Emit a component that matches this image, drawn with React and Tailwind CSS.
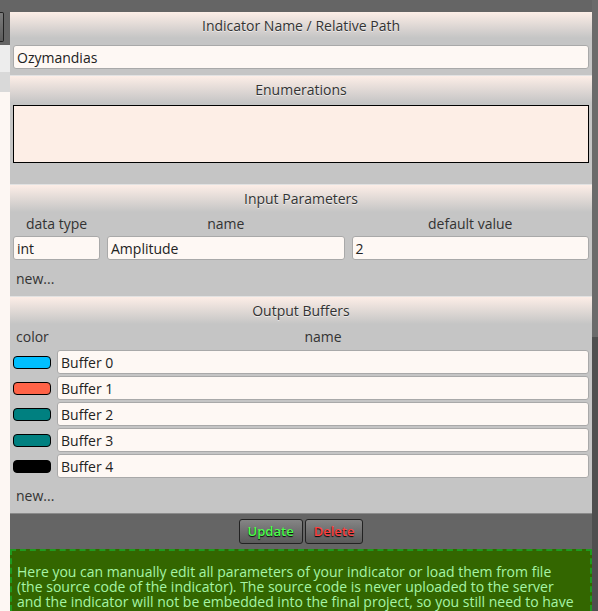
const headerBase =
  "flex items-center justify-center text-[14px] text-[#333] bg-gradient-to-b from-[#fdeee7] to-[#c5c5c5] [text-shadow:0_1px_0_rgba(255,255,255,0.6)]";
const headerCls = `${headerBase} h-[28px] border-t border-[#e2e2e2]`;

const inputCls =
  "h-[24px] flex items-center px-[3px] text-[14px] text-[#222] bg-[#fef8f4] border border-[#a9a9a9] rounded-[3px] w-full";

const Field = ({ value, className = "" }) => (
  <div className={`${inputCls} ${className}`}>{value}</div>
);

const buffers = [
  { name: "Buffer 0", color: "bg-[#00bfff]" },
  { name: "Buffer 1", color: "bg-[#ff6347]" },
  { name: "Buffer 2", color: "bg-[#008080]" },
  { name: "Buffer 3", color: "bg-[#008080]" },
  { name: "Buffer 4", color: "bg-[#000000]" },
];

export default function App() {
  return (
    <div className="w-[598px] h-[611px] overflow-hidden bg-[#656565] flex font-['Open_Sans',sans-serif]">
      {/* left edge of the page behind the dialog */}
      <div className="w-[10px] shrink-0 flex flex-col">
        <div className="h-[12px]" />
        <div className="h-[30px] w-[4px] bg-gradient-to-b from-[#7c7c7c] to-[#5c5c5c] border border-l-0 border-[#222] rounded-r-[2px]" />
        <div className="h-[3px]" />
        <div className="h-[27px] bg-[#ededed]" />
        <div className="h-[20px] bg-[#d9d9d9]" />
        <div className="flex-1 bg-[#fdf7f3]" />
      </div>

      {/* dialog */}
      <div className="w-[582px] shrink-0 mt-[12px] flex flex-col bg-[#c5c5c5]">
        <div className={`${headerBase} h-[26px]`}>Indicator Name / Relative Path</div>
        <div className="px-[3px] pt-[7px] pb-[6px]">
          <Field value="Ozymandias" />
        </div>

        <div className={headerCls}>Enumerations</div>
        <div className="px-[3px] pt-[2px] pb-[21px]">
          <div className="h-[58px] bg-[#fdeee6] border border-black" />
        </div>

        <div className={headerCls}>Input Parameters</div>
        <div className="px-[3px] pb-[8px]">
          <div className="grid grid-cols-[87px_1fr_1fr] gap-x-[7px] text-[14px] text-[#333]">
            <div className="h-[22px] flex items-center justify-center">data type</div>
            <div className="h-[22px] flex items-center justify-center">name</div>
            <div className="h-[22px] flex items-center justify-center">default value</div>
          </div>
          <div className="grid grid-cols-[87px_1fr_1fr] gap-x-[7px] mt-[2px]">
            <Field value="int" />
            <Field value="Amplitude" />
            <Field value="2" />
          </div>
          <div className="h-[20px] mt-[8px] pl-[3px] flex items-center text-[14px] text-[#333]">new...</div>
        </div>

        <div className={headerCls}>Output Buffers</div>
        <div className="px-[3px] pb-[8px]">
          <div className="flex text-[14px] text-[#333] h-[24px] items-center">
            <div className="w-[44px] pl-[3px]">color</div>
            <div className="flex-1 text-center">name</div>
          </div>
          <div className="flex flex-col gap-[2px] mt-[2px]">
            {buffers.map((b) => (
              <div key={b.name} className="flex items-center gap-[6px]">
                <div className={`w-[38px] h-[13px] rounded-[4px] border border-black ${b.color}`} />
                <Field value={b.name} className="flex-1" />
              </div>
            ))}
          </div>
          <div className="h-[20px] mt-[7px] pl-[3px] flex items-center text-[14px] text-[#333]">new...</div>
        </div>

        <div className="bg-[#656565] h-[36px] flex items-center justify-center gap-[2px] border-t border-[#8a8a8a]">
          <button className="h-[25px] px-[8px] rounded-[3px] border border-[#222] bg-gradient-to-b from-[#858585] to-[#5a5a5a] text-[13px] font-semibold text-[#4cff4c] [text-shadow:0_1px_1px_#000]">
            Update
          </button>
          <button className="h-[25px] px-[8px] rounded-[3px] border border-[#222] bg-gradient-to-b from-[#858585] to-[#5a5a5a] text-[13px] font-semibold text-[#ff4040] [text-shadow:0_1px_1px_#000]">
            Delete
          </button>
        </div>

        <div className="flex-1 bg-[#336600] border-2 border-dashed border-[#1f9a1f] border-b-0 pl-[5px] pt-[13px] text-[14px] leading-[15px] text-[#a6f5a6] whitespace-nowrap overflow-hidden">
          Here you can manually edit all parameters of your indicator or load them from file
          <br />
          (the source code of the indicator). The source code is never uploaded to the server
          <br />
          and the indicator will not be embedded into the final project, so you still need to have
          <br />
          it in your "Indicators" folder.
        </div>
      </div>

      {/* right edge */}
      <div className="w-[6px] shrink-0 flex flex-col">
        <div className="h-[337px] bg-[#6b6b6b]" />
        <div className="flex-1 bg-[#4f4f4f]" />
      </div>
    </div>
  );
}
